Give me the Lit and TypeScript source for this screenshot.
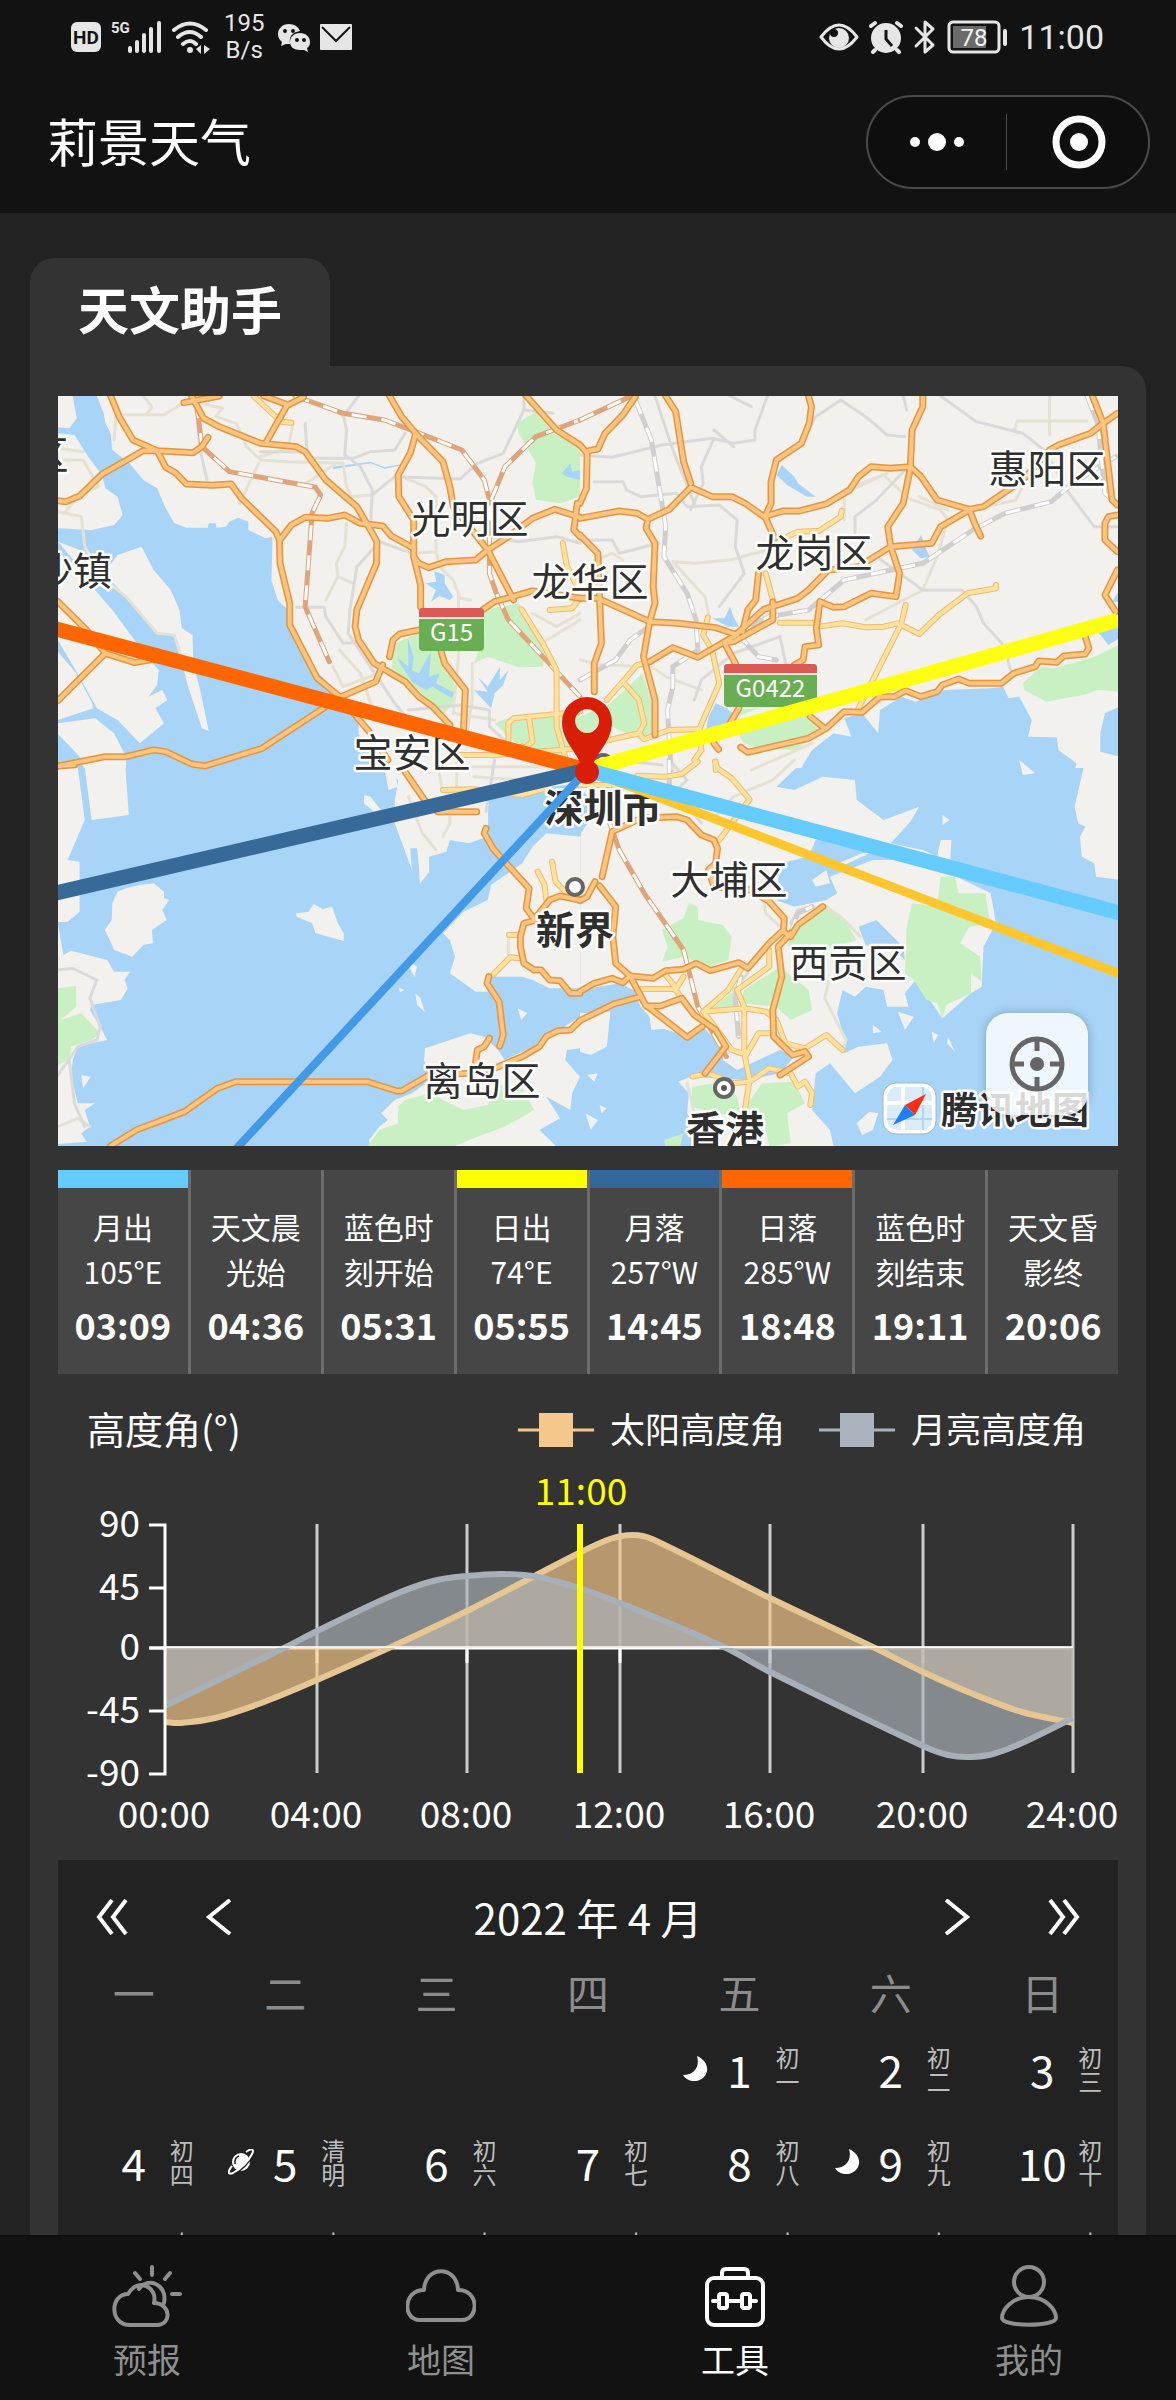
import { LitElement, html, svg, css, nothing } from "lit";
import { customElement, property, state } from "lit/decorators.js";
import { classMap } from "lit/directives/class-map.js";
import { styleMap } from "lit/directives/style-map.js";

const FONT = css`"Noto Sans CJK SC", "Noto Sans", sans-serif`;

/* ---------- status bar ---------- */

@customElement("status-bar")
class StatusBar extends LitElement {
  static styles = css`
    :host { display: flex; justify-content: space-between; align-items: center; height: 74px; padding: 0 72px 0 71px; color: #e6e6e6; font-family: Roboto, ${FONT}; }
    .side { display: flex; align-items: center; gap: 10px; }
    .speed { margin: 0 4px; font-size: 24px; line-height: 27px; text-align: center; }
    .time { font-size: 34px; line-height: 40px; }
    svg { display: block; fill: #e6e6e6; }
    .line { fill: none; stroke: #e6e6e6; stroke-width: 3; stroke-linecap: round; stroke-linejoin: round; }
    .cut { fill: #121212; }
    .cutline { fill: none; stroke: #121212; stroke-width: 3; }
    .hd { font: bold 19px Roboto, sans-serif; fill: #121212; text-anchor: middle; }
    .gen { font: bold 15px Roboto, sans-serif; }
    .level { font: 24px Roboto, sans-serif; text-anchor: middle; fill: #f4f4f4; }
  `;
  render() {
    return html`
      <div class="side">
        <svg width="30" height="32"><rect y="1" width="30" height="30" rx="6" /><text class="hd" x="15" y="23">HD</text></svg>
        <svg width="51" height="34">
          <text class="gen" x="0" y="13">5G</text>
          <rect x="17" y="26" width="4" height="7" rx="2" /><rect x="24" y="20" width="4" height="13" rx="2" />
          <rect x="31" y="13" width="4" height="20" rx="2" /><rect x="38" y="7" width="4" height="26" rx="2" /><rect x="46" y="1" width="4" height="32" rx="2" />
        </svg>
        <svg width="38" height="34" viewBox="0 0 38 34">
          <path d="M2 10 Q18 -3 34 10 M6 17 Q18 7 29 17 M11 24 Q18 18 24 24" style="fill:none;stroke:#e6e6e6;stroke-width:4;stroke-linecap:round" />
          <circle cx="18" cy="30" r="3" /><path d="M29 25 V34 L24 29 Z M32 25 L38 29 L32 34 Z" />
        </svg>
        <div class="speed">195<br />B/s</div>
        <svg width="32" height="30" viewBox="0 0 32 30">
          <path d="M11 2 C4 2 0 7 0 12 C0 16 2 18 4 20 L3 24 L8 22 Q10 22 12 22 Q10 11 22 9 Q19 2 11 2 Z" />
          <path d="M22 11 C16 11 12 15 12 20 C12 25 16 28 22 28 Q24 28 26 28 L30 30 L29 26 Q32 24 32 20 C32 15 28 11 22 11 Z" />
          <g class="cut"><circle cx="7" cy="9" r="2" /><circle cx="15" cy="9" r="2" /><circle cx="19" cy="18" r="2" /><circle cx="26" cy="18" r="2" /></g>
        </svg>
        <svg width="32" height="26"><rect width="32" height="26" rx="1" /><path class="cutline" style="stroke-width:2" d="M2 3 L16 17 L30 3" /></svg>
      </div>
      <div class="side">
        <svg width="40" height="28" viewBox="0 0 40 28">
          <path class="line" d="M2 14 Q20 -10 38 14 Q20 38 2 14 Z" />
          <circle cx="20" cy="15" r="10" /><circle class="cut" cx="15" cy="10" r="4" />
        </svg>
        <svg width="34" height="34" viewBox="0 0 34 34">
          <circle cx="17" cy="18" r="15" /><path class="line" style="stroke-width:4" d="M2 6 L6 3 M32 6 L28 3 M6 30 L4 32 M28 30 L30 32" />
          <path class="cutline" d="M17 10 V19 L23 26" />
        </svg>
        <svg width="24" height="36" viewBox="0 0 24 36"><path class="line" d="M3 9 L20 26 L12 33 V3 L20 10 L3 27" /></svg>
        <svg width="62" height="34" viewBox="0 0 62 34">
          <rect class="line" x="2" y="2" width="50" height="30" rx="4" /><rect x="6" y="6" width="33" height="22" style="fill:#6a6a6a" />
          <rect x="56" y="9" width="4" height="17" rx="2" /><text class="level" x="27" y="26">78</text>
        </svg>
        <div class="time">11:00</div>
      </div>
    `;
  }
}

/* ---------- map ---------- */

interface Tile {
  at: string;
  water?: string[];
  land?: string[];
  green?: string[];
  lake?: string[];
  beige?: string[];
  grey?: string[];
  rail?: string[];
  lightrail?: string[];
  yellow?: string[];
  orange?: string[];
}

const TILES: Tile[] = [
  {
    at: "translate(-18 -16) scale(.3444 .3333)",
    water: [
      "M95 48 L165 48 L185 100 L190 130 L205 160 L210 210 L260 250 L300 300 L340 325 L365 385 L390 430 L425 443 L487 443 L490 430 L510 430 L512 443 L540 440 L550 425 L575 413 L605 425 L605 450 L655 475 L675 470 L672 600 L690 660 L720 690 L725 735 L800 870 L870 945 L925 1020 L925 1065 L965 1090 L1000 1180 L52 1180 V445 L150 450 L215 435 L240 405 L225 350 L190 325 L180 285 L140 230 L100 165 L52 160 V142 L85 145 L107 115 Z",
    ],
    land: [
      "M295 500 L225 525 L200 560 L205 600 L240 640 L290 700 L345 760 L390 770 L405 820 L430 920 L470 1045 L490 1053 L465 930 L445 850 L443 765 L412 745 L405 690 L380 630 L330 570 Z",
      "M52 520 L110 560 L160 630 L210 690 L260 760 L310 830 L345 870 L340 915 L315 950 L355 930 L370 960 L335 985 L360 1030 L290 1090 L225 1020 L165 985 L120 900 L52 780 Z",
      "M52 485 L130 515 L105 550 Z M52 815 L105 880 L150 965 L155 985 L52 1020 Z M52 1030 L160 1015 L215 1060 L250 1130 V1170 H130 L115 1130 L52 1062 Z",
    ],
    green: [
      "M1385 130 L1440 95 L1490 160 L1568 200 V350 L1510 370 L1440 360 L1430 310 L1440 250 L1390 160 Z",
      "M1290 690 L1390 670 L1470 790 L1460 860 L1390 862 L1300 830 L1260 850 L1290 770 Z",
      "M1030 790 L1100 760 L1165 815 L1200 880 L1205 960 L1170 1005 L1100 930 L1020 870 Z",
      "M1320 1030 L1360 1015 L1568 1000 V1110 L1430 1115 L1370 1080 Z",
    ],
    lake: [
      "M1145 573 L1175 585 L1175 610 L1200 650 L1190 660 L1160 648 L1135 665 L1150 630 L1120 610 L1150 605 Z",
      "M1040 835 L1070 860 L1068 775 L1085 830 L1080 870 L1100 880 L1135 815 L1130 890 L1160 880 L1150 910 L1205 940 L1195 955 L1140 920 L1120 930 L1080 905 L1045 850 Z",
      "M1270 890 L1300 920 L1335 862 L1335 900 L1360 870 L1345 915 L1320 940 L1310 985 L1260 930 L1300 935 Z",
      "M1515 280 L1540 250 L1545 275 L1568 270 V300 L1530 290 Z",
      "M850 260 L960 245 L1000 262 L1050 252 L1052 256 L1000 266 L960 250 L852 268 Z",
    ],
    beige: [
      "M300 48 L325 80 L310 104 L220 104 L215 180", "M310 104 H360 L430 60 L530 85 L510 110 L570 130 L600 200 L640 240 L720 245 L880 250 L890 320 L905 350 L960 345 M635 250 L580 370 M640 230 L720 205 L735 130",
      "M600 285 L765 315 L860 250", "M52 395 L120 410 L130 500 L190 600 L250 650 L340 760 L390 765 L410 830", "M52 205 L125 215 M70 240 H125 L170 320 L110 350 L75 395",
      "M890 430 L885 500 L860 550 L865 590 L910 610 M865 590 L830 660", "M1050 290 L1120 320 L1150 350 V520 M1085 520 L1150 515 L1160 560 L1200 600 L1220 655 L1250 660",
      "M850 860 L880 920 L1010 870 M870 810 L930 880 L970 1000", "M1215 650 V830 L1200 1000 L1320 1020 M1255 850 V960 L1240 1060", "M1430 700 L1500 740 L1568 700 M1440 800 L1568 720",
    ],
    grey: [
      "M770 130 L775 215 L640 215 M775 235 L910 235 L960 215 L1030 210 L1060 160 M880 100 L890 150 L885 225 L930 260 L965 330 L960 430 M925 48 L880 110",
      "M970 340 L1030 290 L1220 297 L1270 250 L1345 220 L1405 90 V48 M1405 90 L1490 100", "M450 60 L465 210 L485 300", "M985 485 L920 560 L900 690 L895 760 L1030 970 L1070 1020", "M745 682 H825 L830 710 L880 790 L910 788", "M985 485 L1080 520 M1300 470 L1390 485 L1500 470 L1568 490", "M1070 990 L1220 975 L1305 990 V1040 L1360 1090",
    ],
    rail: [
      "M740 48 L880 100 L1000 120 L1090 155 L1225 210 L1290 300 L1305 360 L1305 580 L1325 640 L1360 720 L1460 830 L1568 950",
      "M455 70 L470 200 L550 275 L800 322 L815 345 L790 400 L770 680 L840 845", "M1310 360 L1350 260 L1440 170 L1568 120",
    ],
    yellow: ["M620 48 L700 125 L730 128", "M1518 490 L1530 560 L1560 620 M1568 655 L1545 685 L1480 690", "M1398 688 L1460 790 L1500 870 L1500 1040 L1525 1130 M1360 1090 V1030 L1375 1015 L1568 995 M1420 1015 L1430 1085 L1400 1110 M1210 1125 H1320 L1568 1105 M1340 1115 L1400 1100"],
    orange: [
      "M205 48 L230 110 L270 180 L340 212 L445 218 L470 200 L488 172", "M52 362 L75 365 L115 348 L180 283 L300 212 H340 L365 262 L395 280 L425 312 L500 316 L555 312 L585 355 L685 455 L695 480 L697 550 L725 670 V735 L805 895 L870 950 L960 1060 L1010 1140",
      "M418 68 L520 48 M440 48 L475 115 L520 140 L640 190 L745 200 L770 215 L830 300 L920 380 L965 460 L978 485 L977 550 L920 690 L915 740 L925 780 L970 850 L1060 905 L1100 950 L1140 980 L1190 1035",
      "M655 190 L715 80 M650 48 L720 75 L765 52", "M700 475 L730 435 L770 412 L835 415 L885 405 L930 430 L995 438 L1020 468 L1085 505",
      "M1015 48 L1050 110 L1095 165 L1170 245 L1190 320 L1200 380 L1300 510 L1375 660", "M1090 165 L1075 220 L1040 285 L1042 350 L1085 420 V530 L1105 615 L1105 680",
      "M1085 530 L1100 550 L1128 563 L1180 545 L1265 540 L1300 510 L1360 470 L1430 415 L1495 388 L1568 412", "M1412 48 L1500 150 L1568 195 M1560 370 L1550 450 L1568 470",
      "M1285 690 L1320 665 L1430 633 L1568 655", "M1015 830 L1025 780 L1045 762 L1100 750 M1165 815 L1175 850 L1235 930 L1230 1045", "M995 855 L975 905 L875 950 M830 980 L645 1105 L480 1158 L440 1152 L365 1115 L330 1110 L250 1130 H190 L52 1158",
      "M52 665 L135 750 L190 820 L52 962 M190 820 L275 848 L330 838",
    ],
  },
  {
    at: "translate(522 -16) scale(.3571 .3333)",
    water: [
      "M610 1180 L650 1110 L710 1060 L760 1070 L740 1015 L790 1000 L835 1060 L840 990 L900 950 L940 965 L1020 930 L1150 925 L1185 920 L1200 955 L1230 950 L1265 1020 L1255 1070 L1335 1072 L1340 1110 L1390 1150 L1385 1180 Z",
      "M1510 980 L1470 1000 L1457 1060 V1115 L1510 1130 Z M1450 755 L1510 740 V775 L1480 795 Z M1490 665 H1510 V630 Z",
    ],
    green: [
      "M1240 910 L1290 860 L1330 865 L1440 830 L1510 795 V935 L1450 930 L1410 945 L1305 965 L1245 930 Z", "M85 970 L175 880 L200 960 L210 1070 L170 1080 L90 1040 L0 1070 V1010 Z", "M430 1040 L640 1005 L670 1040 L610 1110 L500 1105 L460 1090 Z M430 990 L500 985 L440 1010 Z",
    ],
    lake: ["M565 255 L600 290 L610 310 L660 350 L635 350 L580 315 L550 285 Z", "M370 715 L405 715 L420 680 L430 710 L445 740 L415 740 Z", "M930 510 L955 465 L970 510 L980 530 L955 535 Z", "M380 970 L410 985 L440 1010 L415 1050 L350 1065 L360 1010 Z"],
    beige: ["M1215 155 L1225 123 H1420 M1315 48 V165", "M560 500 L420 540 L320 550 L260 545 L350 650 L360 700", "M855 290 L920 355 L1010 390 L1030 420 L1000 530 L960 630 M950 350 L1030 390", "M740 330 L860 280 L740 340 V420", "M800 720 L960 630", "M0 840 L60 855 L200 860 L240 890 L340 930", "M120 540 L90 520 L45 540", "M1100 390 L1220 360 L1240 320", "M780 1000 L850 960 M480 1170 L650 1090"],
    grey: [
      "M0 225 L90 232 L230 195 L370 175 L430 190 L490 180 V150 L525 48 M375 150 L430 200 M375 175 L340 260 L345 310 L310 390 M210 48 L260 210 L320 370 M420 48 L480 80",
      "M40 305 H120 L130 330 L170 350 L270 340 M270 340 L300 380 L390 375 L440 420 L435 500 L460 580 L390 680", "M640 150 L660 110 L730 60 L800 110 L860 165 L910 170", "M1010 48 L1110 125 L1240 160 L1300 210 L1370 340 L1440 440 H1505", "M910 270 L830 360 L770 410 V460 M830 530 L960 630 L1070 630 L1110 680 L1130 730 L1190 800 L1205 870", "M0 480 H90 L110 520 L220 490", "M560 770 L580 870 L690 980 M560 770 L430 820 L340 900 L320 960 M905 48 L915 90",
    ],
    lightrail: ["M155 60 L200 180 L240 440 L235 530 L300 640 L325 720 L330 810 L260 860 V920 L245 990 L255 1170", "M0 900 L100 840 L140 780 L200 735", "M440 760 L530 710 L640 690 L740 600 L960 550 L1100 450 L1190 400 L1320 365 L1380 310 L1500 230", "M440 760 L500 830 L550 840", "M1420 48 L1450 130 L1470 340 L1500 370"],
    rail: ["M0 120 L140 50"],
    yellow: [
      "M580 470 L610 455 L670 452 L730 410 L733 392", "M520 580 L540 660 V720", "M560 728 H650 L670 740 L735 730 L800 742 L850 740 L890 730 L950 762 L1005 705 L1085 640 L1165 625 L1165 615", "M912 675 L900 730 L780 985", "M358 712 L345 765 L370 810 L390 910 L335 1045 L340 1110 L320 1140", "M75 960 L120 905 L160 855 L200 845 M120 905 L165 960 L180 1030 L165 1060 L180 1078 L250 1050 L330 1048 M0 1100 L165 1060 M380 1145 V1170",
    ],
    orange: [
      "M0 195 L20 220 L18 325 L0 370 M25 212 L50 207 L70 160 L120 105 L155 50", "M240 48 L268 95 L290 245 L310 310", "M0 415 L110 393 L160 400 L190 418 L250 388 L310 322 L370 350 H425 L465 372 L515 410 L570 393 H615 L690 372 L755 330 L780 290 L815 260 L870 265 L925 260 L955 290 L1000 360 L1090 388 L1130 380 L1240 300 L1315 210 L1340 195 L1430 160 L1465 130 L1505 100",
      "M640 48 L648 80 L642 130 L620 190 L550 240 L535 305 L535 370 L518 410 L545 475", "M960 48 V80 L930 150 L925 265 L905 370 L862 440 L870 500 L895 580 L885 650 L815 640 L740 680 L710 682 L672 665 L662 745 L668 795 L630 800 L625 840 L600 855",
      "M1435 48 L1465 130 L1490 360 L1505 375", "M1505 405 L1480 410 L1470 430 V480 L1505 515 M1505 570 L1470 645 L1500 695", "M1090 388 L1105 430 L1122 468", "M1090 390 L1010 440 L985 490 L870 500 L780 560 L695 570 L640 630 L610 655 L515 688 L430 770 L330 832 L260 803 L195 845", "M500 580 L492 660 L470 690 L455 755 M540 665 V720 L430 785 L405 790 L435 850",
      "M0 465 L50 520 L55 660 L60 790 L40 850 V935", "M0 655 H50 L195 725 L275 730 L380 743 L440 765", "M190 418 L185 445 L210 490 L205 620 L210 670 L195 725 L178 830 L210 960 V1065",
      "M445 985 L420 1030 M375 1090 L388 1108 M450 1102 L470 1117 L640 1075 L690 1045 L740 995 L790 997 L840 950 L880 950 L912 932 L955 950 L1000 935 L1015 915 L1060 897 L1090 910 H1180 L1215 880 L1275 860 L1285 843 L1335 847 L1355 828 L1415 822 L1425 805 L1415 770 M645 1010 L685 1045",
    ],
  },
  {
    at: "translate(-18 364) scale(.3444 .3333)",
    water: ["M52 25 H950 L1000 30 L1040 60 L1030 125 L1030 190 L1080 330 L1075 265 L1095 265 L1100 320 L1103 372 L1130 335 V290 L1180 275 L1190 240 L1245 250 L1300 230 L1302 120 L1350 100 L1480 80 L1570 70 V1160 H52 Z"],
    land: [
      "M52 24 L110 24 L130 180 L105 240 L80 300 L115 305 V455 L80 485 L52 487 Z M130 24 H248 L258 165 L150 180 Z",
      "M52 490 L68 585 L90 572 L195 600 L215 635 L262 635 L245 660 L255 685 L235 720 L150 735 L145 750 L175 800 L195 840 L150 850 L110 860 L95 900 L90 950 L110 1030 L160 1030 L130 1050 L145 1100 L120 1120 L135 1145 L52 1152 Z",
      "M250 385 L290 375 L330 370 L360 395 V415 L375 420 L355 450 L368 480 L325 510 L328 550 L300 555 L268 590 L215 570 L205 545 L188 510 L208 480 L210 430 L225 395 Z",
      "M743 460 L780 455 L795 432 L820 447 L848 440 L865 490 L882 520 V543 L800 520 L790 490 L745 470 Z",
      "M1470 220 L1430 260 L1400 310 L1310 375 L1300 420 L1230 455 L1170 520 L1190 540 L1205 590 L1190 640 L1265 695 H1300 L1305 650 L1400 650 L1430 660 L1480 685 H1570 V230 Z",
      "M1118 865 L1190 840 L1250 820 L1290 830 L1330 870 L1350 900 L1430 860 L1568 770 V865 L1530 870 L1525 900 L1568 950 L1545 1000 L1540 1050 L1470 1010 L1510 1075 L1450 1110 L1500 1160 H960 L955 1140 L985 1100 L1010 1080 L990 1060 L1030 1020 L1080 1000 L1135 960 L1115 900 Z",
      "M942 105 L960 110 L990 150 L970 155 L940 130 Z M1060 597 L1095 620 L1087 652 Z M1090 700 L1105 715 L1117 755 L1095 735 Z M1040 682 L1058 690 L1046 697 Z M1387 745 L1415 760 L1397 780 Z M120 945 L147 950 L125 985 Z M1000 20 L1012 90 L1040 80 L1025 20 Z",
    ],
    green: [
      "M52 685 L105 678 V740 L60 780 L120 760 L175 820 L150 840 L90 860 L85 900 L52 915 Z",
      "M1060 1020 L1130 1000 L1230 1050 L1300 1035 L1330 975 L1400 985 L1435 1050 L1350 1100 L1270 1130 L1200 1160 H950 L985 1110 L1040 1090 V1040 Z",
    ],
    beige: ["M1150 0 L1170 90 L1190 110 V190 L1170 230 M1210 0 V90 M1070 110 L1110 220 L1150 270 M1240 20 H1500 M1260 50 L1400 60 M52 1100 L110 1075 L145 1100 M1360 530 V600"],
    grey: ["M52 630 L95 625 L165 660 L145 715 L175 800 L165 840 L110 860 L52 945 M85 900 L100 1030 L130 1100", "M1320 0 L1295 155"],
    yellow: ["M1170 90 L1260 88 L1400 105 L1470 85", "M1445 335 L1465 375 L1470 420 M1487 305 L1497 365 L1530 400", "M1362 525 H1390 M1390 595 L1365 592 L1315 645"],
    orange: [
      "M52 18 L100 14 M1060 35 L1120 125 M1155 155 H1268", "M1295 205 L1290 220 L1315 265 L1345 300 L1420 385 L1412 445 L1435 478 L1480 420 L1510 408 L1568 420", "M1435 482 L1405 490 L1395 530 V560 L1405 610 L1435 630 H1455 L1480 660 L1510 662 L1540 700 H1568",
      "M1303 650 L1298 670 L1333 725 L1345 825 L1335 858", "M205 1158 L280 1110 L420 1055 L515 985 L570 965 H950 L1035 993 H1050 L1130 945 L1240 940 L1320 925 L1400 890 L1450 860 L1470 830 L1505 812 L1540 810 L1568 782", "M1265 905 L1270 870 L1290 860 L1305 835",
    ],
  },
  {
    at: "translate(522 364) scale(.3571 .3333)",
    water: [
      "M605 24 L550 80 L600 90 L680 50 L770 60 L775 120 L850 180 L950 140 L925 185 L870 250 L960 270 L1000 290 L1010 240 L1040 240 L1035 340 L1150 400 L1165 490 L1130 560 L1125 680 L1095 700 L1015 775 L940 660 L910 700 L920 740 L860 740 L850 690 L800 680 L770 710 L735 690 L720 760 L745 850 L740 880 L780 860 L860 850 L875 900 L840 950 L770 1000 L700 910 L660 940 L650 1050 L700 1110 L710 1160 H1510 V24 Z",
      "M0 690 L110 670 L150 690 L170 740 L220 800 L300 830 L345 800 L405 870 L400 900 L440 930 L560 870 L600 890 L560 940 L470 960 L310 950 L275 965 L305 1000 L300 1060 L340 1130 L370 1160 H0 Z",
      "M560 310 L640 290 L660 240 L760 220 L930 270 L960 300 L820 300 L700 350 L720 400 L690 420 L600 440 L550 420 Z M780 500 L830 480 L905 560 L910 600 L880 570 L800 555 Z",
      "M-4 71 L22 110 L40 170 L14 200 L-4 232 Z",
    ],
    land: [
      "M1410 24 H1510 V360 L1445 350 L1440 310 L1405 290 L1400 230 L1415 200 L1395 190 L1385 140 Z", "M0 760 L85 755 L75 860 L30 885 L0 875 Z M190 740 L260 760 L290 800 L200 810 Z",
      "M700 320 L790 280 L820 275 L740 315 Z M650 360 L690 330 L700 370 L660 380 Z M1015 165 L1035 180 L1015 195 Z M890 755 L935 770 L910 810 Z M820 795 L845 815 L820 820 Z M1030 830 L1050 875 L1028 850 Z M985 815 L1003 825 L990 850 Z M775 1090 L810 1055 L835 1060 L820 1110 L790 1125 Z M1230 0 L1275 40 L1240 45 Z",
      "M20 945 L50 940 L40 965 Z M55 1035 L75 1045 L60 1060 Z M15 1060 L50 1080 L30 1110 Z",
    ],
    green: [
      "M230 510 L290 475 L305 430 L330 440 L330 480 L400 495 L425 530 L415 600 L360 620 L290 590 L230 605 L245 560 Z", "M580 560 L595 520 L680 440 L730 465 L775 540 L700 565 Z M460 690 L560 620 L640 690 L650 750 L590 780 L550 740 L450 730 Z M420 700 L450 690 L430 740 L370 745 Z",
      "M1010 350 H1050 L1060 400 L1135 400 L1145 470 L1165 490 L1090 500 L1065 550 L1120 590 L1125 665 L1095 640 V700 L1025 735 L1015 775 L1000 730 L970 720 L935 660 L910 640 L915 500 L930 430 L1000 440 Z",
      "M315 980 L400 965 L440 1010 L450 1060 L510 970 L600 965 L630 1030 L580 1060 L590 1150 L530 1160 L510 1060 L450 1070 L380 1060 L310 1040 Z M235 1140 L290 1120 L280 1160 H240 Z",
    ],
    beige: ["M600 0 L540 60 L430 110 L370 180", "M510 400 L520 460 L560 500 M690 440 L740 480 L785 530 M700 650 L685 715 L745 840 L735 870", "M300 970 L320 1060 L345 1130"],
    grey: ["M250 0 L300 60 L270 90 L340 190 M100 0 L230 15", "M470 640 L430 690 L440 830 M590 490 L610 450 L650 440"],
    lightrail: ["M250 0 V90 M450 650 L435 720 L445 830", "M590 520 L610 460 L650 440"],
    rail: ["M80 180 L110 270 L180 400 L290 570 L330 740 L410 890"],
    yellow: [
      "M160 47 L240 50 L285 42 L330 5 M378 5 L385 25 L425 55 L475 118 L390 240", "M0 75 H130 L160 90 M240 645 L270 685 L290 650 M170 687 H265 L290 720", "M450 630 L415 690 L345 755 L370 790 L425 870 L465 885 L500 820 H540 M345 755 L460 745 L520 755 L550 780 L575 850 L630 865 L690 825 L735 870 M530 570 L530 620 L440 690 L460 740 V880 L475 960 L460 1060", "M315 950 L360 940 L430 970 L475 965 L530 925 L590 940 L610 980 L630 965 L650 1000 L645 1035",
    ],
    orange: [
      "M62 350 L90 215 L170 175 L270 170 L300 180 L340 225 L375 240 L385 265 L380 310 L360 330 L375 380 L480 390 L530 425 L572 475 L570 510 L530 550 L470 625 L445 608 L365 632 L325 610 L290 628 L240 632 L205 655 L140 648 L100 610 L92 530 L100 440 L55 378 M0 422 L20 410 L42 365",
      "M0 695 L40 670 L90 655 L120 668 L140 648 L185 738 H225 L285 715 L320 765 L380 810 L408 860 L350 940", "M0 782 L95 732 L170 710 M190 740 L300 832 L342 800", "M680 440 L610 495 L590 530 L570 515 M590 520 L555 560 L565 650 L540 750 L542 830 L595 885 L630 875 L640 890 L560 945",
    ],
  },
];

interface Bearing { x: number; y: number; width: number; color: string; }

const BEARINGS: Bearing[] = [
  { x: 1060, y: 224, width: 15, color: "#ffff14" },
  { x: -2, y: 233, width: 15, color: "#ff6600" },
  { x: -2, y: 497, width: 15, color: "#376999" },
  { x: 178, y: 753, width: 8, color: "#4199e8" },
  { x: 1062, y: 578, width: 9, color: "#ffc62e" },
  { x: 1062, y: 517, width: 15, color: "#66ccff" },
];

interface Place { x: number; y: number; name: string; bold?: boolean; }

const PLACES: Place[] = [
  { x: -9, y: 59, name: "区" },
  { x: 15, y: 175, name: "沙镇" },
  { x: 412, y: 123, name: "光明区" },
  { x: 532, y: 186, name: "龙华区" },
  { x: 756, y: 157, name: "龙岗区" },
  { x: 989, y: 73, name: "惠阳区" },
  { x: 354, y: 357, name: "宝安区" },
  { x: 545, y: 412, name: "深圳市", bold: true },
  { x: 517, y: 534, name: "新界", bold: true },
  { x: 671, y: 484, name: "大埔区" },
  { x: 790, y: 567, name: "西贡区" },
  { x: 424, y: 685, name: "离岛区" },
  { x: 667, y: 734, name: "香港", bold: true },
];

@customElement("bearing-map")
class BearingMap extends LitElement {
  static styles = css`
    :host { display: block; position: relative; font-family: ${FONT}; }
    .map { display: block; width: 100%; height: auto; background: #f2f1ed; }
    .water, .lake { fill: #a8d4f7; }
    .land { fill: #f2f1ed; }
    .green { fill: #c8f0c2; }
    .road { fill: none; stroke-linejoin: round; stroke-linecap: round; vector-effect: non-scaling-stroke; }
    .beige { stroke: #e5e1d3; stroke-width: 3px; }
    .grey { stroke: #dadada; stroke-width: 3px; }
    .rail { stroke: #e0a37a; stroke-width: 5px; }
    .lightrail { stroke: #cfcfcf; stroke-width: 5px; }
    .dash { stroke: #fff; stroke-width: 3px; stroke-dasharray: 15 15; stroke-linecap: butt; }
    .yellow-case { stroke: #f5b973; stroke-width: 6px; }
    .yellow { stroke: #ffe29c; stroke-width: 4px; }
    .orange-case { stroke: #e2963f; stroke-width: 7px; }
    .orange { stroke: #ffc580; stroke-width: 4px; }
    .place { font-size: 39px; fill: #2f2f2f; stroke: #fff; stroke-width: 5px; paint-order: stroke; stroke-linejoin: round; text-anchor: middle; }
    .bold { font-weight: bold; }
    .shield { font-size: 24px; fill: #fff; text-anchor: middle; }
    .brand { font-size: 37px; }
    .city { fill: #fff; stroke: #666; stroke-width: 4; }
    .locate { position: absolute; right: 30px; bottom: 31px; width: 102px; height: 102px; padding: 0; border: 0; border-radius: 22px; background: rgba(255, 255, 255, 0.82); box-shadow: 0 0 10px rgba(0, 0, 0, 0.25); display: grid; place-items: center; }
  `;
  private strokes(paths: string[] | undefined, name: string) {
    return (paths ?? []).map((d) => svg`<path class="road ${name}" d=${d} />`);
  }
  private fills(paths: string[] | undefined, name: string) {
    return (paths ?? []).map((d) => svg`<path class=${name} d=${d} />`);
  }
  private layer(draw: (t: Tile) => unknown) {
    return TILES.map((t) => svg`<g transform=${t.at}>${draw(t)}</g>`);
  }
  render() {
    return html`
      <svg class="map" viewBox="0 0 1060 750" role="img" aria-label="深圳市">
        ${this.layer((t) => [this.fills(t.water, "water"), this.fills(t.land, "land"), this.fills(t.green, "green"), this.fills(t.lake, "lake")])}
        ${this.layer((t) => [this.strokes(t.beige, "beige"), this.strokes(t.grey, "grey")])}
        ${this.layer((t) => [this.strokes(t.rail, "rail"), this.strokes(t.lightrail, "lightrail"), this.strokes(t.rail, "dash"), this.strokes(t.lightrail, "dash")])}
        ${this.layer((t) => this.strokes(t.yellow, "yellow-case"))}
        ${this.layer((t) => this.strokes(t.yellow, "yellow"))}
        ${this.layer((t) => this.strokes(t.orange, "orange-case"))}
        ${this.layer((t) => this.strokes(t.orange, "orange"))}
        <circle class="city" cx="517" cy="491" r="8" /><circle class="city" cx="666" cy="692" r="9" /><circle cx="666" cy="692" r="3" fill="#555" />
        <circle class="city" cx="545" cy="368" r="9" />
        ${this.shield(361, 212, 65, "G15")} ${this.shield(666, 268, 93, "G0422")}
        ${PLACES.map((p) => svg`<text class=${p.bold ? "place bold" : "place"} x=${p.x} y=${p.y + 14}>${p.name}</text>`)}
        ${BEARINGS.map((b) => svg`<line x1="529" y1="374" x2=${b.x} y2=${b.y} stroke=${b.color} stroke-width=${b.width} />`)}
        <path fill="#d81e06" fill-rule="evenodd" d="M529 301 a25 25 0 0 1 25 25 C554 346 538 356 534 372 H524 C520 356 504 346 504 326 a25 25 0 0 1 25 -25 Z M529 313 a12 12 0 1 0 0.1 0 Z" />
        <circle cx="529" cy="376" r="12" fill="#d81e06" />
        <rect x="825" y="687" width="53" height="51" rx="13" fill="#fff" stroke="#9db8cc" />
        <rect x="829" y="691" width="45" height="43" rx="10" fill="#dcebf8" />
        <path d="M829 723 H874 M865 691 V734" stroke="#a9dcee" stroke-width="2" /><path d="M845 691 V734 M829 707 H874" stroke="#fff" stroke-width="4" />
        <path d="M868 698 L857 719 L847 709 Z" fill="#ff2d12" /><path d="M835 729 L847 709 L857 719 Z" fill="#1a80ff" />
        <text class="place bold brand" x="957" y="728">腾讯地图</text>
      </svg>
      <button class="locate" aria-label="定位">
        <svg width="56" height="56" viewBox="0 0 56 56" fill="none" stroke="#666" stroke-width="5">
          <circle cx="28" cy="28" r="25" /><path d="M28 3 V15 M28 41 V53 M3 28 H15 M41 28 H53" /><circle cx="28" cy="28" r="7" fill="#666" stroke="none" />
        </svg>
      </button>
    `;
  }
  private shield(x: number, y: number, w: number, name: string) {
    return svg`
      <rect x=${x} y=${y} width=${w} height="43" rx="4" fill="#69ae52" />
      <path d="M${x} ${y + 9} V${y + 4} q0 -4 4 -4 H${x + w - 4} q4 0 4 4 V${y + 9} Z" fill="#db5a56" />
      <rect x=${x} y=${y + 9} width=${w} height="2" fill="#f3e6dc" />
      <text class="shield" x=${x + w / 2} y=${y + 33}>${name}</text>`;
  }
}

/* ---------- strip of events ---------- */

interface SkyEvent { lines: [string, string]; time: string; color?: string; }

const EVENTS: SkyEvent[] = [
  { lines: ["月出", "105°E"], time: "03:09", color: "#66ccff" },
  { lines: ["天文晨", "光始"], time: "04:36" },
  { lines: ["蓝色时", "刻开始"], time: "05:31" },
  { lines: ["日出", "74°E"], time: "05:55", color: "#ffff00" },
  { lines: ["月落", "257°W"], time: "14:45", color: "#336699" },
  { lines: ["日落", "285°W"], time: "18:48", color: "#ff6600" },
  { lines: ["蓝色时", "刻结束"], time: "19:11" },
  { lines: ["天文昏", "影终"], time: "20:06" },
];

@customElement("event-strip")
class EventStrip extends LitElement {
  static styles = css`
    :host { display: block; font-family: ${FONT}; color: #fff; }
    .strip { display: grid; grid-template-columns: repeat(8, 1fr); gap: 3px; margin: 0; padding: 0; list-style: none; background: #6b6b6b; }
    .event { background: #464646; text-align: center; padding-bottom: 20px; }
    .bar { height: 18px; margin-bottom: 16px; }
    .line { font-size: 30px; line-height: 45px; }
    .time { font-size: 36px; line-height: 60px; font-weight: bold; }
  `;
  render() {
    return html`<ul class="strip">
      ${EVENTS.map((e) => html`<li class="event">
        <div class="bar" style=${styleMap({ background: e.color ?? "transparent" })}></div>
        <div class="line">${e.lines[0]}</div>
        <div class="line">${e.lines[1]}</div>
        <div class="time">${e.time}</div>
      </li>`)}
    </ul>`;
  }
}

/* ---------- altitude chart ---------- */

type Point = [number, number];

const SUN: Point[] = [[107, 262], [122, 263], [157, 258], [206, 242], [259, 220], [333, 187], [409, 151], [521, 93], [552, 79], [575, 75], [594, 79], [712, 138], [817, 188], [865, 212], [915, 234], [964, 252], [1015, 263]];
const MOON: Point[] = [[107, 246], [228, 187], [259, 171], [333, 136], [375, 121], [409, 116], [445, 114], [480, 117], [521, 128], [562, 143], [666, 187], [712, 212], [865, 286], [890, 295], [912, 297], [935, 294], [964, 283], [1015, 258]];
const HOURS: [number, string][] = [[107, "00:00"], [259, "04:00"], [409, "08:00"], [562, "12:00"], [712, "16:00"], [865, "20:00"], [1015, "24:00"]];
const DEGREES: [number, string][] = [[65, "90"], [128, "45"], [188, "0"], [251, "-45"], [314, "-90"]];

function smooth(points: Point[]): string {
  let d = `M${points[0][0]} ${points[0][1]}`;
  for (let i = 0; i < points.length - 1; i++) {
    const a = points[Math.max(i - 1, 0)];
    const b = points[i];
    const c = points[i + 1];
    const e = points[Math.min(i + 2, points.length - 1)];
    const k = c[0] - b[0];
    const s1 = (c[1] - a[1]) / (c[0] - a[0]);
    const s2 = (e[1] - b[1]) / (e[0] - b[0]);
    d += ` C${b[0] + k / 3} ${b[1] + (s1 * k) / 3} ${c[0] - k / 3} ${c[1] - (s2 * k) / 3} ${c[0]} ${c[1]}`;
  }
  return d;
}

@customElement("altitude-chart")
class AltitudeChart extends LitElement {
  static styles = css`
    :host { display: block; font-family: ${FONT}; color: #fff; }
    .head { display: flex; align-items: center; justify-content: space-between; padding: 24px 32px 2px 29px; height: 60px; }
    .title { font-size: 38px; line-height: 60px; }
    .legend { display: flex; gap: 34px; }
    .entry { display: flex; align-items: center; gap: 16px; font-size: 35px; line-height: 56px; }
    .key { display: block; padding-top: 4px; }
    .plot { display: block; width: 100%; height: auto; overflow: visible; }
    .tick { font-size: 37px; fill: #fff; }
    .end { text-anchor: end; }
    .mid { text-anchor: middle; }
    .now { font-size: 37px; fill: #ffff00; text-anchor: middle; }
    .grid { stroke: #ccc; stroke-width: 3; }
    .axis { stroke: #fff; stroke-width: 3; fill: none; }
    .curve { fill: none; stroke-width: 6; }
  `;
  private entry(color: string, name: string) {
    return html`<span class="entry">
      <svg class="key" width="76" height="36"><path d="M0 18 H76" stroke=${color} stroke-width="3" /><rect x="21" y="1" width="34" height="34" fill=${color} /></svg>${name}
    </span>`;
  }
  render() {
    const sun = smooth(SUN);
    const moon = smooth(MOON);
    return html`
      <div class="head">
        <span class="title">高度角(°)</span>
        <div class="legend">${this.entry("#f5c78b", "太阳高度角")}${this.entry("#a9b2bd", "月亮高度角")}</div>
      </div>
      <svg class="plot" viewBox="0 0 1060 400" role="img" aria-label="太阳高度角 月亮高度角">
        ${HOURS.slice(1).map(([x]) => svg`<line class="grid" x1=${x} x2=${x} y1="64" y2="313" />`)}
        <path class="axis" d="M91 188 H1015 M259 188 V203 M409 188 V203 M562 188 V203 M712 188 V203 M865 188 V203" />
        <path d="${sun} V188 H107 Z" fill="#f5c78b" fill-opacity=".68" />
        <path d="${moon} V188 H107 Z" fill="#a9b2b8" fill-opacity=".68" />
        <path class="curve" d=${sun} stroke="#e6c794" />
        <path class="curve" d=${moon} stroke="#a7b0b8" />
        <path class="axis" d="M91 65 H107 V314 H91 M91 128 H107 M91 188 H107 M91 251 H107" />
        <path d="M107 187 H1015" stroke="#fff" stroke-opacity=".7" stroke-width="2" />
        <line x1="522" x2="522" y1="64" y2="313" stroke="#ffff00" stroke-width="6" />
        <text class="now" x="523" y="45">11:00</text>
        ${DEGREES.map(([y, t]) => svg`<text class="tick end" x="82" y=${y + 12}>${t}</text>`)}
        ${HOURS.map(([x, t]) => svg`<text class="tick mid" x=${x - 1} y="368">${t}</text>`)}
      </svg>
    `;
  }
}

/* ---------- calendar ---------- */

interface Day { n: number; lunar: string; sign?: "moon" | "planet"; }

const WEEKDAYS = ["一", "二", "三", "四", "五", "六", "日"];
const WEEKS: (Day | null)[][] = [
  [null, null, null, null, { n: 1, lunar: "初一", sign: "moon" }, { n: 2, lunar: "初二" }, { n: 3, lunar: "初三" }],
  [{ n: 4, lunar: "初四" }, { n: 5, lunar: "清明", sign: "planet" }, { n: 6, lunar: "初六" }, { n: 7, lunar: "初七" }, { n: 8, lunar: "初八" }, { n: 9, lunar: "初九", sign: "moon" }, { n: 10, lunar: "初十" }],
  [{ n: 11, lunar: "十一" }, { n: 12, lunar: "十二" }, { n: 13, lunar: "十三" }, { n: 14, lunar: "十四" }, { n: 15, lunar: "十五" }, { n: 16, lunar: "十六" }, { n: 17, lunar: "十七" }],
];

@customElement("month-calendar")
class MonthCalendar extends LitElement {
  static styles = css`
    :host { display: block; background: #222; color: #fff; font-family: ${FONT}; }
    .head { display: flex; align-items: center; justify-content: space-between; padding: 0 36px; height: 114px; }
    .pair { display: flex; gap: 72px; }
    .month { font-size: 42px; line-height: 60px; }
    button { font: inherit; color: inherit; background: none; border: 0; padding: 0; }
    .step { display: block; }
    .step svg { display: block; fill: none; stroke: #fff; stroke-width: 4; }
    table { width: 100%; table-layout: fixed; border-collapse: collapse; }
    th { font-size: 42px; line-height: 36px; height: 36px; font-weight: normal; color: #8c8c8c; padding: 0; }
    td { padding: 0; height: 93px; }
    tbody tr:first-child td { padding-top: 12px; }
    .day { display: grid; grid-template-columns: 1fr 56px 1fr; align-items: center; width: 100%; height: 48px; }
    .sign { justify-self: end; display: block; margin-right: 3px; }
    .num { font-size: 44px; line-height: 48px; text-align: center; }
    .lunar { margin-left: 8px; width: 24px; font-size: 24px; line-height: 24px; color: #bdbdbd; overflow-wrap: anywhere; }
  `;
  private sign(kind: Day["sign"]) {
    if (kind === "moon") return html`<svg class="sign" width="25" height="26" viewBox="0 0 25 26"><path fill="#fff" d="M14 0 C21 3 25 9 24 15 C22 26 6 29 0 19 C12 19 17 10 14 0 Z" /></svg>`;
    if (kind === "planet") return html`<svg class="sign" width="26" height="26" viewBox="0 0 26 26">
      <circle cx="13" cy="13" r="9" fill="#fff" /><path d="M7 15 Q6 9 11 7" fill="none" stroke="#222" stroke-width="1.5" />
      <path d="M4 26 Q17 20 25 6" fill="none" stroke="#222" stroke-width="2" />
      <path d="M18 3 C23 -1 27 0 24 5 C20 13 12 20 5 24 C0 26 -1 23 4 17" fill="none" stroke="#fff" stroke-width="2" /></svg>`;
    return html`<span></span>`;
  }
  private step(label: string, d: string, width: number) {
    return html`<button class="step" aria-label=${label}><svg width=${width} height="36" viewBox="0 0 ${width} 36"><path d=${d} /></svg></button>`;
  }
  render() {
    return html`
      <div class="head">
        <div class="pair">${this.step("上一年", "M18 1 L5 18 L18 35 M32 1 L19 18 L32 35", 36)}${this.step("上一月", "M28 1 L7 18 L28 35", 30)}</div>
        <span class="month">2022 年 4 月</span>
        <div class="pair">${this.step("下一月", "M2 1 L23 18 L2 35", 30)}${this.step("下一年", "M4 1 L17 18 L4 35 M18 1 L31 18 L18 35", 36)}</div>
      </div>
      <table>
        <thead><tr>${WEEKDAYS.map((d) => html`<th>${d}</th>`)}</tr></thead>
        <tbody>
          ${WEEKS.map((week) => html`<tr>${week.map((d) => html`<td>${d
            ? html`<button class="day">${this.sign(d.sign)}<span class="num">${d.n}</span><span class="lunar">${d.lunar}</span></button>`
            : nothing}</td>`)}</tr>`)}
        </tbody>
      </table>
    `;
  }
}

/* ---------- tab bar ---------- */

const TABS = [
  { name: "预报", icon: svg`<path d="M18 60 C-3 60 -2 29 16 29 C26 12 46 22 42 38 C59 38 60 60 45 60 Z M27 24 C34 12 56 18 52 38 M40 10 V2 M28 14 L23 8 M53 14 L58 8 M60 29 H68" />` },
  { name: "地图", icon: svg`<path d="M14 55 C-4 55 -3 25 18 25 C19 0 51 0 52 25 C74 25 73 55 56 55 Z" />` },
  { name: "工具", icon: svg`<rect x="7" y="13" width="56" height="47" rx="7" /><path d="M22 13 V8 q0 -4 4 -4 H44 q4 0 4 4 V13 M13 36 H18 M27 36 H42 M51 36 H56" /><rect x="19" y="29" width="8" height="14" rx="2" /><rect x="42" y="29" width="8" height="14" rx="2" />` },
  { name: "我的", icon: svg`<circle cx="35" cy="17" r="15" /><path d="M35 32 C18 32 8 45 8 53 C8 62 62 62 62 53 C62 45 52 32 35 32 Z" />` },
];

@customElement("tab-bar")
class TabBar extends LitElement {
  @property({ type: Number }) current = 2;
  static styles = css`
    :host { display: block; background: #121212; border-top: 2px solid #0e0e0e; font-family: ${FONT}; }
    .tabs { display: flex; padding: 28px 0 19px; }
    .tab { flex: 1; display: flex; flex-direction: column; align-items: center; gap: 6px; color: #8f8f8f; text-decoration: none; font-size: 34px; line-height: 44px; }
    .tab svg { display: block; fill: none; stroke: currentColor; stroke-width: 4; stroke-linecap: round; stroke-linejoin: round; }
    .on { color: #fff; }
  `;
  render() {
    return html`<nav class="tabs">
      ${TABS.map((t, i) => html`<a href="#" class=${classMap({ tab: true, on: i === this.current })}>
        <svg width="70" height="66" viewBox="0 0 70 66">${t.icon}</svg>${t.name}
      </a>`)}
    </nav>`;
  }
}

/* ---------- page ---------- */

@customElement("app-root")
class AppRoot extends LitElement {
  @state() private tab = 2;
  static styles = css`
    :host { display: flex; flex-direction: column; height: 100vh; background: #222; color: #fff; font-family: ${FONT}; }
    .top { flex: none; background: #121212; }
    .nav { display: flex; align-items: center; justify-content: space-between; height: 136px; padding: 0 26px 3px 47px; }
    h1, h2 { margin: 0; font-size: 51px; line-height: 60px; }
    h1 { font-weight: normal; padding-bottom: 4px; }
    .capsule { display: flex; align-items: center; width: 280px; height: 90px; border: 2px solid #4a4a4a; border-radius: 48px; background: #0e0e0e; }
    .capsule button { flex: 1; height: 100%; padding: 0; border: 0; background: none; display: grid; place-items: center; }
    .capsule .close { padding-left: 4px; }
    .rule { width: 1px; height: 56px; background: #4a4a4a; }
    .scroll { flex: 1; min-height: 0; overflow-y: auto; scrollbar-width: none; padding: 45px 30px 0; }
    .tag { width: fit-content; padding: 20px 48px 28px; border-radius: 24px 24px 0 0; background: #333; }
    .card { padding: 30px 28px; border-radius: 0 24px 0 0; background: #333; }
    .strip { margin-top: 24px; }
    .foot { flex: none; }
  `;
  render() {
    return html`
      <header class="top">
        <status-bar></status-bar>
        <div class="nav">
          <h1>莉景天气</h1>
          <div class="capsule">
            <button aria-label="更多"><svg width="60" height="24" fill="#fff"><circle cx="8" cy="12" r="5" /><circle cx="30" cy="12" r="9" /><circle cx="52" cy="12" r="5" /></svg></button>
            <span class="rule"></span>
            <button class="close" aria-label="关闭"><svg width="54" height="54" fill="#fff"><circle cx="27" cy="27" r="23" fill="none" stroke="#fff" stroke-width="7" /><circle cx="27" cy="27" r="9" /></svg></button>
          </div>
        </div>
      </header>
      <main class="scroll">
        <h2 class="tag">天文助手</h2>
        <section class="card">
          <bearing-map></bearing-map>
          <event-strip class="strip"></event-strip>
          <altitude-chart></altitude-chart>
          <month-calendar></month-calendar>
        </section>
      </main>
      <tab-bar class="foot" .current=${this.tab}></tab-bar>
    `;
  }
}
